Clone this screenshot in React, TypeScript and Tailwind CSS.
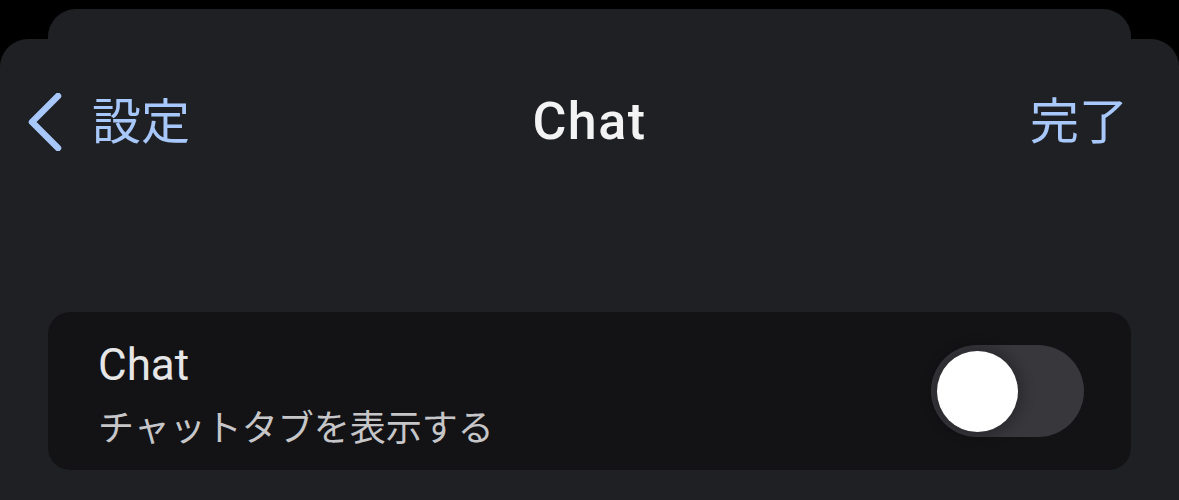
export default function App() {
  return (
    <div className="h-[500px] w-[1179px] overflow-hidden bg-black pt-[9px] font-['Roboto','Noto_Sans_CJK_JP',sans-serif]">
      {/* sheet stacked behind */}
      <div className="mx-[48px] h-[30px] rounded-t-[28px] bg-[#1f2023]" />

      {/* front sheet */}
      <div className="h-[461px] rounded-t-[28px] bg-[#1f2023]">
        <div className="grid h-[166px] grid-cols-3 items-center">
          <div className="flex items-center gap-[30px] pl-[28px] text-[#a8c7fa]">
            <svg width="34" height="58" viewBox="0 0 34 58" fill="none">
              <polyline
                points="30,3 4,29 30,55"
                stroke="currentColor"
                strokeWidth="6.5"
                strokeLinecap="round"
                strokeLinejoin="round"
              />
            </svg>
            <span className="text-[49px] leading-none">設定</span>
          </div>
          <div className="text-center text-[52px] font-medium leading-none tracking-[1.5px] text-[#f3f3f3]">Chat</div>
          <div className="flex justify-end pr-[51px]">
            <span className="text-[49px] leading-none text-[#a8c7fa]">完了</span>
          </div>
        </div>

        <div className="mx-[48px] mt-[107px] flex h-[158px] items-center justify-between rounded-[22px] bg-[#131316] pl-[50px] pr-[47px]">
          <div className="flex flex-col self-start pt-[31px]">
            <span className="text-[44px] leading-[44px] text-[#e6e6e6]">Chat</span>
            <span className="mt-[22px] text-[36px] leading-[40px] text-[#c6c6c8]">チャットタブを表示する</span>
          </div>
          <div className="flex h-[92px] w-[153px] items-center rounded-full bg-[#38373c] pl-[6px]">
            <div className="h-[81px] w-[81px] rounded-full bg-white shadow-[0_0_12px_6px_rgba(0,0,0,0.22)]" />
          </div>
        </div>
      </div>
    </div>
  );
}
